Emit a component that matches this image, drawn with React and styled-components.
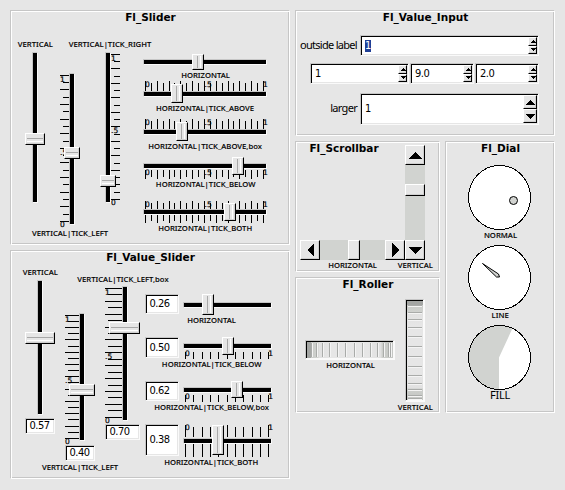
import React from "react";
import styled, { createGlobalStyle, css } from "styled-components";

const face = "#e6e6e6";
const shade = "#c6c6c6";
const trough = "#d1d3d0";

const GlobalStyle = createGlobalStyle`
  * { box-sizing: border-box; }
  body { margin: 0; background: ${face}; color: #000; overflow: hidden; }
`;

const Page = styled.div`
  width: 565px;
  height: 490px;
  padding: 10px;
  display: flex;
  gap: 5px;
  background: ${face};
  font-family: "Noto Sans", "DejaVu Sans", sans-serif;
`;

const Stack = styled.div`
  display: flex;
  flex-direction: column;
  gap: 5px;
`;

const Split = styled.div`
  display: flex;
  gap: 5px;
`;

const Panel = styled.section`
  width: ${(p) => p.$w}px;
  height: ${(p) => p.$h}px;
  border: 1px solid ${shade};
  border-right-color: #fff;
  border-bottom-color: #fff;
  box-shadow: inset 1px 1px 0 #fff, inset -1px -1px 0 ${shade};
`;

const Title = styled.h2`
  margin: 0;
  height: 12px;
  width: ${(p) => (p.$w ? `${p.$w}px` : "auto")};
  font: bold 10.5px/12px "DejaVu Sans", sans-serif;
  text-align: center;
  white-space: nowrap;
  text-indent: 1px;
`;

const Caption = styled.span`
  flex: none;
  height: 10px;
  font-size: 7px;
  font-weight: 500;
  line-height: 12px;
  white-space: nowrap;
  transform: translateX(0.4px) scaleX(1.1);
  -webkit-text-stroke: 0.1px #000;
  margin-top: ${(p) => p.$mt || 0}px;
`;

const LargeCaption = styled.span`
  height: 12px;
  font-size: 11px;
  line-height: 10px;
  letter-spacing: -0.3px;
`;

const Columns = styled.div`
  display: grid;
  grid-template-columns: ${(p) => p.$cols};
  column-gap: ${(p) => p.$gap || 0}px;
  padding-left: ${(p) => p.$pl}px;
`;

const Cell = styled.div`
  display: flex;
  flex-direction: column;
  align-items: center;
  padding-top: ${(p) => p.$pt || 0}px;
`;

const NarrowCell = styled(Cell)`
  width: 46px;
`;

const ValueSliders = styled(Cell)`
  align-items: stretch;
  margin-left: -5px;
`;

const Item = styled(Cell)`
  padding-top: 0;
  margin-top: ${(p) => p.$mt}px;
`;

const sunken = css`
  border: 1px solid ${shade};
  border-right-color: #fafafa;
  border-bottom-color: #fafafa;
  box-shadow: inset 1px 1px 0 #000, inset -1px -1px 0 ${face};
`;

const ValueBox = styled.div`
  ${sunken}
  flex: none;
  width: ${(p) => p.$w}px;
  height: ${(p) => p.$h}px;
  margin-top: ${(p) => p.$mt || 0}px;
  padding: 0 0 0 3.5px;
  background: #fff;
  display: flex;
  align-items: center;
  font: 11px/12px "DejaVu Sans Condensed", "Noto Sans", sans-serif;
  letter-spacing: -0.5px;
`;

const ValueRow = styled.div`
  display: flex;
  gap: 4px;
  align-self: flex-start;
  height: ${(p) => p.$h}px;
`;

/* ---------- sliders ---------- */

const SliderBox = styled.div`
  position: relative;
  flex: none;
  width: ${(p) => p.$w}px;
  height: ${(p) => p.$h}px;
  margin-top: ${(p) => p.$mt || 0}px;
`;

const Groove = styled.div`
  position: absolute;
  background: #000;
  border: 1px solid ${shade};
  border-right-color: #fafafa;
  border-bottom-color: #fafafa;
  ${(p) =>
    p.$vertical
      ? css`top: 0; bottom: 0; width: 6px; left: ${p.$at}px;`
      : css`left: 0; right: 0; height: 6px; top: ${p.$at}px;`}
`;

const raised = css`
  background: ${face};
  border: 1px solid #fff;
  border-right-color: #000;
  border-bottom-color: #000;
  box-shadow: inset -1px -1px 0 #cfcfcf;
`;

const Knob = styled.div`
  ${raised}
  position: absolute;
  left: ${(p) => p.$x}px;
  top: ${(p) => p.$y}px;
  width: ${(p) => p.$w}px;
  height: ${(p) => p.$h}px;
  &::after {
    content: "";
    position: absolute;
    ${(p) =>
      p.$vertical
        ? css`left: 1px; right: 1px; top: 4px; height: 2px; border-top: 1px solid #a8a8a8; border-bottom: 1px solid #fff;`
        : css`top: 1px; bottom: 1px; left: 4px; width: 2px; border-left: 1px solid #a8a8a8; border-right: 1px solid #fff;`}
  }
`;

const Scale = styled.svg`
  position: absolute;
  inset: 0;
  overflow: visible;
  shape-rendering: crispEdges;
  text { font: 7.5px "DejaVu Sans", sans-serif; stroke: #000; stroke-width: 0.2px; }
`;

function VSlider({ w = 20, h, mt, track, knob, ticks }) {
  const lines = [];
  if (ticks) {
    for (let i = 0; i <= 20; i++) {
      const y = Math.floor(ticks.from + ((ticks.to - ticks.from) * i) / 20);
      const x = i % 2 ? ticks.minor : ticks.x;
      lines.push(<rect key={i} x={x} y={y} width={ticks.end - x} height="1" />);
    }
  }
  return (
    <SliderBox $w={w} $h={h} $mt={mt}>
      <Groove $vertical $at={track} />
      {ticks && (
        <Scale width={w} height={h}>
          {lines}
          <text x={ticks.x} y={ticks.from + 6.5}>1</text>
          <text x={ticks.x} y={(ticks.from + ticks.to) / 2 + 6.5}>.5</text>
          <text x={ticks.x} y={ticks.to + 6}>0</text>
        </Scale>
      )}
      <Knob $vertical $x={knob.x} $y={knob.y} $w={knob.w} $h={12} />
    </SliderBox>
  );
}

function HSlider({ w = 124, h, track, knob, above, below, count = 20, end = 120.5, labelY }) {
  const lines = [];
  for (let i = 0; i <= count; i++) {
    const x = Math.floor(2.4 + ((end - 2.4) * i) / count);
    const long = count === 20 ? i % 2 === 0 : i % 5 === 0;
    if (above) {
      const y = above[0] + (long ? 0 : 2);
      lines.push(<rect key={`a${i}`} x={x} y={y} width="1" height={above[1] - y} />);
    }
    if (below) {
      const y2 = below[1] - (long || count === 10 ? 0 : 2);
      lines.push(<rect key={`b${i}`} x={x} y={below[0]} width="1" height={y2 - below[0]} />);
    }
  }
  return (
    <SliderBox $w={w} $h={h}>
      <Groove $at={track} />
      {lines.length > 0 && (
        <Scale width={w} height={h}>
          {lines}
          <text x="2" y={labelY}>0</text>
          {count === 20 && <text x="61.5" y={labelY}>.5</text>}
          <text x={end - 0.5} y={labelY}>1</text>
        </Scale>
      )}
      <Knob $x={knob.x} $y={knob.y} $w={12} $h={knob.h} />
    </SliderBox>
  );
}

/* ---------- value inputs ---------- */

const FieldRow = styled.div`
  display: flex;
  justify-content: flex-end;
  align-items: center;
  gap: ${(p) => p.$gap || 0}px;
  margin-top: ${(p) => p.$mt}px;
  padding-right: 15px;
`;

const FieldLabel = styled.label`
  font-size: 11px;
  line-height: 12px;
  letter-spacing: -0.7px;
  padding: 0 3px 2px 0;
  white-space: nowrap;
`;

const Field = styled.div`
  ${sunken}
  flex: none;
  width: ${(p) => p.$w}px;
  height: ${(p) => p.$h}px;
  padding: 1px 1px 1px 4px;
  background: #fff;
  display: flex;
  justify-content: space-between;
  align-items: center;
  font: 11px/12px "DejaVu Sans Condensed", "Noto Sans", sans-serif;
  letter-spacing: -0.5px;
`;

const FieldText = styled.span`
  ${(p) => p.$selected && css`background: #1f3f96; color: #fff;`}
`;

const Spinner = styled.div`
  align-self: stretch;
  display: flex;
  flex-direction: column;
  width: ${(p) => p.$w}px;
`;

const SpinButton = styled.div`
  ${raised}
  flex: 1;
  display: flex;
  align-items: center;
  justify-content: center;
`;

const Arrow = ({ dir, size }) => {
  const half = size / 2;
  const shapes = {
    up: [size, half, `0,${half} ${half},0 ${size},${half}`],
    down: [size, half, `0,0 ${half},${half} ${size},0`],
    left: [half, size, `${half},0 0,${half} ${half},${size}`],
    right: [half, size, `0,0 ${half},${half} 0,${size}`],
  };
  const [w, h, points] = shapes[dir];
  return (
    <svg width={w} height={h} shapeRendering="crispEdges">
      <polygon points={points} />
    </svg>
  );
};

function ValueInput({ value, w, h = 21, spin = 9, arrow = 6, selected }) {
  return (
    <Field $w={w} $h={h}>
      <FieldText $selected={selected}>{value}</FieldText>
      <Spinner $w={spin}>
        <SpinButton><Arrow dir="up" size={arrow} /></SpinButton>
        <SpinButton><Arrow dir="down" size={arrow} /></SpinButton>
      </Spinner>
    </Field>
  );
}

/* ---------- scrollbars ---------- */

const Bar = styled.div`
  display: flex;
  flex-direction: ${(p) => (p.$vertical ? "column" : "row")};
  width: ${(p) => p.$w}px;
  height: ${(p) => p.$h}px;
  margin-top: ${(p) => p.$mt || 0}px;
  background: ${trough};
`;

const BarButton = styled.div`
  ${raised}
  flex: none;
  width: 20px;
  height: 20px;
  display: flex;
  align-items: center;
  justify-content: center;
`;

const Thumb = styled.div`
  ${raised}
  flex: none;
  width: ${(p) => p.$w}px;
  height: ${(p) => p.$h}px;
`;

const Gap = styled.div`
  flex: ${(p) => p.$grow};
`;

/* ---------- rollers ---------- */

const RollerFrame = styled.div`
  flex: none;
  display: flex;
  width: ${(p) => p.$w}px;
  height: ${(p) => p.$h}px;
  border: 1px solid ${shade};
  border-right: 2px solid #fafafa;
  border-bottom: 2px solid #fafafa;
  background: linear-gradient(
    ${(p) => (p.$vertical ? "to bottom" : "to right")},
    #a4a6a4 0, #a4a6a4 5px, #c9cbc8 5px, #d0d2cf 12px, #e1e1e1 13px, ${face} 26px,
    ${face} calc(100% - 26px), #e1e1e1 calc(100% - 12px), #cdcfcc calc(100% - 11px), #c4c6c3 100%
  );
`;

const RollerLines = styled.svg`
  display: block;
  shape-rendering: crispEdges;
`;

const RollerBody = styled.div`
  display: grid;
  grid-template-columns: 90px 20px;
  column-gap: 10px;
  padding-left: 9px;
`;

function Roller({ vertical, w, h, at }) {
  return (
    <RollerFrame $vertical={vertical} $w={w} $h={h}>
      <RollerLines width={w - 3} height={h - 3}>
        {at.map((p) =>
          vertical ? (
            <g key={p}>
              <rect x="2" y={p} width={w - 6} height="1" fill="#a9aba9" />
              <rect x="2" y={p + 1} width={w - 6} height="1" fill="#f4f4f4" />
            </g>
          ) : (
            <g key={p}>
              <rect x={p} y="2" width="1" height={h - 6} fill="#a9aba9" />
              <rect x={p + 1} y="2" width="1" height={h - 6} fill="#f4f4f4" />
            </g>
          )
        )}
        <path d={`M0 .5H${w}M.5 0V${h}`} stroke="#000" />
      </RollerLines>
    </RollerFrame>
  );
}

/* ---------- dials ---------- */

const DialFace = styled.svg`
  flex: none;
  display: block;
  margin-top: ${(p) => p.$mt}px;
`;

function Dial({ mt, filled, children }) {
  return (
    <DialFace $mt={mt} width="64" height="65">
      <ellipse cx="31.5" cy="32.5" rx="31" ry="32" fill="#fff" />
      {filled && <path d="M31 32.5V64.5A31 32 0 0 1 .5 32.5A31 32 0 0 1 44.5 3.3Z" fill={trough} />}
      {children}
      <ellipse cx="31.5" cy="32.5" rx="31" ry="32" fill="none" stroke="#000" shapeRendering="crispEdges" />
    </DialFace>
  );
}

export default function App() {
  return (
    <>
      <GlobalStyle />
      <Page>
        <Stack>
          <Panel $w={280} $h={235}>
            <Title>Fl_Slider</Title>
            <Columns $pl={6} $cols="36px 34px 56px 124px">
              <Cell $pt={16}>
                <Caption>VERTICAL</Caption>
                <VSlider mt={3} h={151} track={7} knob={{ x: 0, y: 81, w: 20 }} />
              </Cell>
              <Cell $pt={50}>
                <VSlider
                  h={152}
                  track={9}
                  ticks={{ from: 2.3, to: 148.3, x: 0, minor: 3, end: 9 }}
                  knob={{ x: 4, y: 74, w: 16 }}
                />
                <Caption $mt={3}>VERTICAL|TICK_LEFT</Caption>
              </Cell>
              <NarrowCell $pt={16}>
                <Caption>VERTICAL|TICK_RIGHT</Caption>
                <VSlider
                  mt={3}
                  h={151}
                  track={5}
                  ticks={{ from: 2.3, to: 147.3, x: 11, minor: 14, end: 20 }}
                  knob={{ x: 0, y: 123, w: 16 }}
                />
              </NarrowCell>
              <Cell>
                <Item $mt={31}>
                  <HSlider h={16} track={5} knob={{ x: 49, y: 0, h: 16 }} />
                  <Caption>HORIZONTAL</Caption>
                </Item>
                <Item $mt={1}>
                  <HSlider h={22} track={10} above={[0, 10]} labelY={6} knob={{ x: 28, y: 3, h: 19 }} />
                  <Caption>HORIZONTAL|TICK_ABOVE</Caption>
                </Item>
                <Item $mt={6}>
                  <HSlider h={22} track={10} above={[0, 10]} labelY={6} knob={{ x: 33, y: 3, h: 19 }} />
                  <Caption>HORIZONTAL|TICK_ABOVE,box</Caption>
                </Item>
                <Item $mt={6}>
                  <HSlider h={22} track={6} below={[13, 22]} labelY={18} knob={{ x: 89, y: 0, h: 18 }} />
                  <Caption>HORIZONTAL|TICK_BELOW</Caption>
                </Item>
                <Item $mt={12}>
                  <HSlider
                    h={22}
                    track={8}
                    above={[0, 8]}
                    below={[14, 22]}
                    labelY={6}
                    knob={{ x: 81, y: 2, h: 18 }}
                  />
                  <Caption>HORIZONTAL|TICK_BOTH</Caption>
                </Item>
              </Cell>
            </Columns>
          </Panel>

          <Panel $w={280} $h={229}>
            <Title>Fl_Value_Slider</Title>
            <Columns $pl={14} $gap={10} $cols="30px 30px 35px 127px">
              <Cell $pt={4}>
                <Caption>VERTICAL</Caption>
                <VSlider w={30} mt={3} h={135} track={12} knob={{ x: 0, y: 52, w: 30 }} />
                <ValueBox $w={30} $h={16} $mt={3}>0.57</ValueBox>
              </Cell>
              <Cell $pt={50}>
                <VSlider
                  w={30}
                  h={128}
                  track={14}
                  ticks={{ from: 2.3, to: 125.3, x: 0, minor: 3, end: 14 }}
                  knob={{ x: 4, y: 71, w: 26 }}
                />
                <ValueBox $w={30} $h={16} $mt={4}>0.40</ValueBox>
                <Caption $mt={1}>VERTICAL|TICK_LEFT</Caption>
              </Cell>
              <Cell $pt={11}>
                <Caption>VERTICAL|TICK_LEFT,box</Caption>
                <VSlider
                  w={35}
                  mt={2}
                  h={135}
                  track={17}
                  ticks={{ from: 2.3, to: 131.3, x: 0, minor: 3, end: 17 }}
                  knob={{ x: 4, y: 36, w: 31 }}
                />
                <ValueBox $w={35} $h={16} $mt={3}>0.70</ValueBox>
              </Cell>
              <ValueSliders>
                <Item $mt={31}>
                  <ValueRow $h={21}>
                    <ValueBox $w={34} $h={20}>0.26</ValueBox>
                    <HSlider w={89} h={21} track={8} knob={{ x: 19, y: 0, h: 21 }} />
                  </ValueRow>
                  <Caption>HORIZONTAL</Caption>
                </Item>
                <Item $mt={12}>
                  <ValueRow $h={22}>
                    <ValueBox $w={34} $h={21}>0.50</ValueBox>
                    <HSlider w={89} h={22} track={6} count={10} end={85.7} below={[15, 22]} labelY={19} knob={{ x: 39, y: 0, h: 18 }} />
                  </ValueRow>
                  <Caption>HORIZONTAL|TICK_BELOW</Caption>
                </Item>
                <Item $mt={12}>
                  <ValueRow $h={21}>
                    <ValueBox $w={34} $h={20}>0.62</ValueBox>
                    <HSlider w={89} h={21} track={6} count={10} end={85.7} below={[14, 21]} labelY={18} knob={{ x: 48, y: 0, h: 17 }} />
                  </ValueRow>
                  <Caption>HORIZONTAL|TICK_BELOW,box</Caption>
                </Item>
                <Item $mt={12}>
                  <ValueRow $h={33}>
                    <ValueBox $w={34} $h={32}>0.38</ValueBox>
                    <HSlider
                      w={89}
                      h={33}
                      track={14}
                      count={10}
                      end={85.7}
                      above={[1, 13]}
                      below={[20, 33]}
                      labelY={6}
                      knob={{ x: 29, y: 1, h: 30 }}
                    />
                  </ValueRow>
                  <Caption>HORIZONTAL|TICK_BOTH</Caption>
                </Item>
              </ValueSliders>
            </Columns>
          </Panel>
        </Stack>

        <Stack>
          <Panel $w={260} $h={126}>
            <Title>Fl_Value_Input</Title>
            <FieldRow $mt={12}>
              <FieldLabel>outside label</FieldLabel>
              <ValueInput value="1" w={179} selected />
            </FieldRow>
            <FieldRow $mt={7} $gap={1}>
              <ValueInput value="1" w={99} />
              <ValueInput value="9.0" w={64} />
              <ValueInput value="2.0" w={64} />
            </FieldRow>
            <FieldRow $mt={9}>
              <FieldLabel>larger</FieldLabel>
              <ValueInput value="1" w={179} h={32} spin={14} arrow={10} />
            </FieldRow>
          </Panel>

          <Split>
            <Stack>
              <Panel $w={145} $h={131}>
                <Columns $pl={4} $cols="105px 20px">
                  <div>
                    <Title $w={87}>Fl_Scrollbar</Title>
                    <Cell>
                      <Bar $w={105} $h={20} $mt={86}>
                        <BarButton><Arrow dir="left" size={14} /></BarButton>
                        <Gap $grow={28} />
                        <Thumb $w={12} $h={20} />
                        <Gap $grow={25} />
                        <BarButton><Arrow dir="right" size={14} /></BarButton>
                      </Bar>
                      <Caption>HORIZONTAL</Caption>
                    </Cell>
                  </div>
                  <Cell $pt={3}>
                    <Bar $vertical $w={20} $h={115}>
                      <BarButton><Arrow dir="up" size={14} /></BarButton>
                      <Gap $grow={19} />
                      <Thumb $w={20} $h={12} />
                      <Gap $grow={44} />
                      <BarButton><Arrow dir="down" size={14} /></BarButton>
                    </Bar>
                    <Caption>VERTICAL</Caption>
                  </Cell>
                </Columns>
              </Panel>

              <Panel $w={145} $h={136}>
                <Title>Fl_Roller</Title>
                <RollerBody>
                  <Cell $pt={50}>
                    <Roller w={90} h={20} at={[5, 10, 16, 23, 31, 39, 48, 56, 64, 71, 77, 82, 84]} />
                    <Caption>HORIZONTAL</Caption>
                  </Cell>
                  <Cell $pt={9}>
                    <Roller vertical w={20} h={103} at={[5, 12, 19, 27, 36, 46, 56, 66, 75, 83, 89, 95, 98]} />
                    <Caption>VERTICAL</Caption>
                  </Cell>
                </RollerBody>
              </Panel>
            </Stack>

            <Panel $w={110} $h={272}>
              <Title>Fl_Dial</Title>
              <Cell>
                <Dial mt={11}>
                  <circle cx="45.5" cy="35.5" r="4" fill={trough} stroke="#000" />
                </Dial>
                <Caption>NORMAL</Caption>
                <Dial mt={5}>
                  <path d="M14.5 18.5L30.5 29L31.5 32L28.5 32Z" fill={trough} stroke="#000" />
                </Dial>
                <Caption>LINE</Caption>
                <Dial mt={5} filled />
                <LargeCaption>FILL</LargeCaption>
              </Cell>
            </Panel>
          </Split>
        </Stack>
      </Page>
    </>
  );
}
